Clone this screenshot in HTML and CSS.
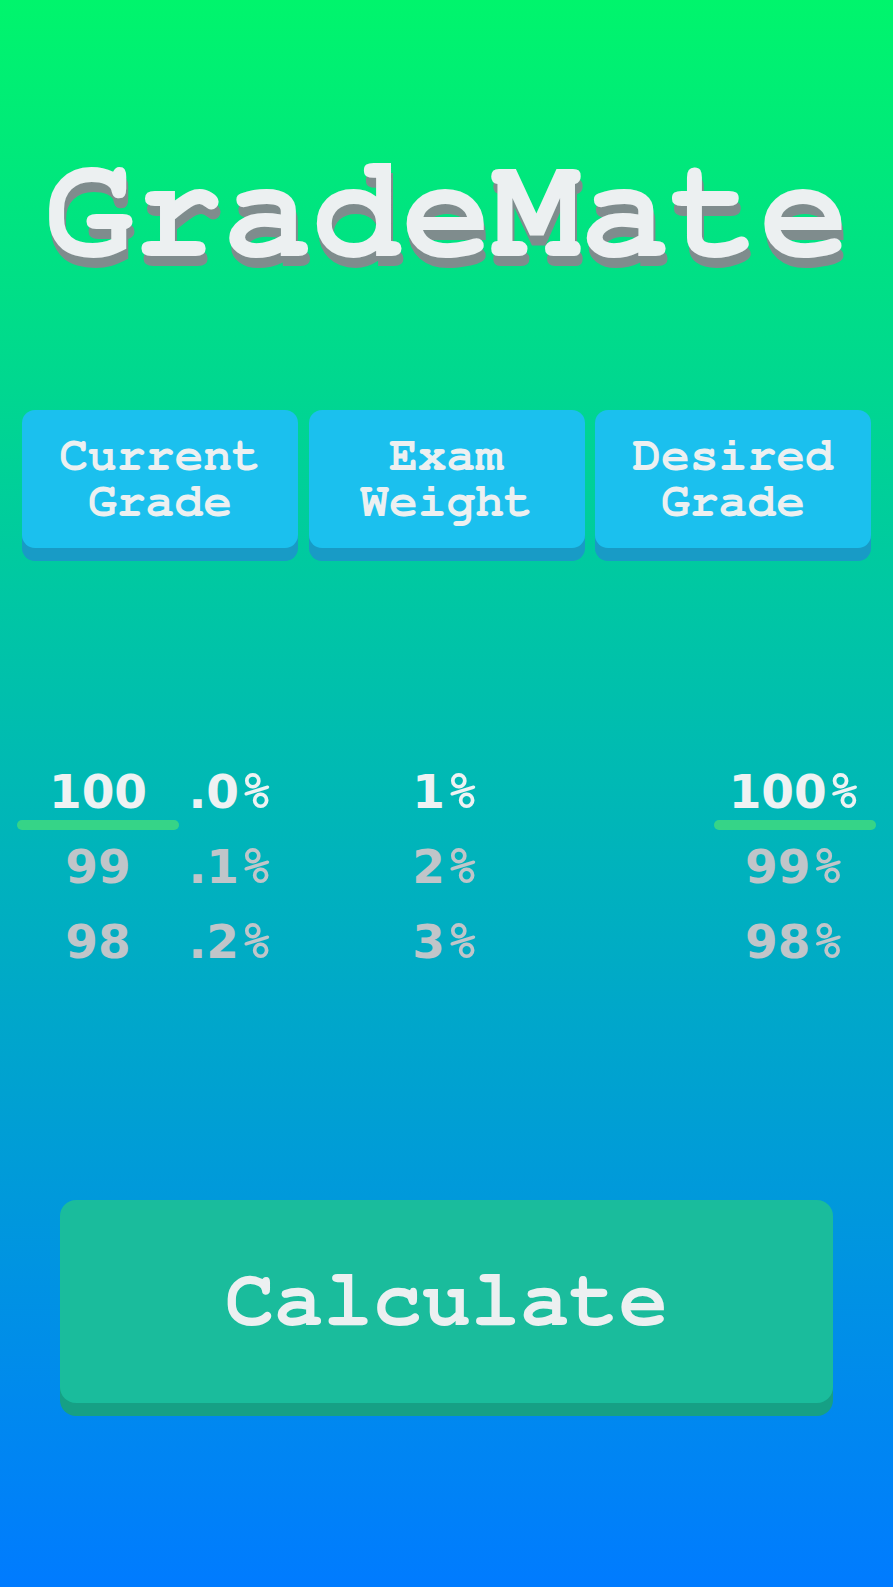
FILE: index.html
```html
<!DOCTYPE html>
<html lang="en">
<head>
<meta charset="utf-8">
<title>GradeMate</title>
<link rel="stylesheet" href="styles.css">
</head>
<body>
<main class="app">
  <h1 class="title">GradeMate</h1>

  <div class="tabs">
    <div class="tab">Current<br>Grade</div>
    <div class="tab">Exam<br>Weight</div>
    <div class="tab">Desired<br>Grade</div>
  </div>

  <div class="pickers">
    <div class="wheel">
      <div class="item selected marked"><span class="num">100</span></div>
      <div class="item"><span class="num">99</span></div>
      <div class="item"><span class="num">98</span></div>
    </div>
    <div class="wheel">
      <div class="item selected"><span class="num">.0</span><span class="pct">%</span></div>
      <div class="item"><span class="num">.1</span><span class="pct">%</span></div>
      <div class="item"><span class="num">.2</span><span class="pct">%</span></div>
    </div>
    <div class="wheel">
      <div class="item selected"><span class="num">1</span><span class="pct">%</span></div>
      <div class="item"><span class="num">2</span><span class="pct">%</span></div>
      <div class="item"><span class="num">3</span><span class="pct">%</span></div>
    </div>
    <div class="spacer"></div>
    <div class="wheel">
      <div class="item selected marked"><span class="num">100</span><span class="pct">%</span></div>
      <div class="item"><span class="num">99</span><span class="pct">%</span></div>
      <div class="item"><span class="num">98</span><span class="pct">%</span></div>
    </div>
  </div>

  <button class="calc">Calculate</button>
</main>
</body>
</html>
```

FILE: styles.css
```css
html, body {
  margin: 0;
  padding: 0;
}

body {
  width: 893px;
  height: 1587px;
  overflow: hidden;
  background: linear-gradient(to bottom, #00f56c 0%, #007bff 100%);
  font-family: "Nimbus Mono PS", "Nimbus Mono L", "FreeMono", "Liberation Mono", "Courier New", monospace;
  color: #ecf0f1;
}

.app {
  display: flex;
  flex-direction: column;
  align-items: stretch;
}

.title {
  margin: 137px 0 0;
  font-size: 149px;
  line-height: 149px;
  font-weight: 700;
  text-align: center;
  color: #ecf0f1;
  text-shadow: 2px 10px 0 #7f8c8d;
}

.tabs {
  display: grid;
  grid-template-columns: repeat(3, 1fr);
  column-gap: 10.5px;
  padding: 0 22px;
  margin-top: 124px;
}

.tab {
  height: 138px;
  border-radius: 13px;
  background: #1bc0ee;
  box-shadow: 0 13px 0 #189bc6;
  display: flex;
  align-items: center;
  justify-content: center;
  text-align: center;
  font-size: 48px;
  line-height: 46px;
  font-weight: 700;
  color: #ecf0f1;
}

.pickers {
  display: grid;
  grid-template-columns: 162px 104px 326px 1fr 162px;
  padding: 0 17px;
  margin-top: 206px;
}

.wheel {
  display: flex;
  flex-direction: column;
}

.item {
  position: relative;
  height: 75px;
  line-height: 75px;
  display: flex;
  justify-content: center;
  align-items: baseline;
  color: #c0c5c9;
}

.item.selected {
  color: #eef2f3;
}

.num {
  font-family: "DejaVu Sans", Verdana, sans-serif;
  font-weight: 700;
  font-size: 47px;
}

.pct {
  font-family: "Nimbus Mono PS", "Nimbus Mono L", "FreeMono", "Liberation Mono", "Courier New", monospace;
  font-weight: 700;
  font-size: 56px;
  margin-left: 1px;
}

.marked::after {
  content: "";
  position: absolute;
  left: 0;
  right: 0;
  top: 66px;
  height: 10px;
  border-radius: 5px;
  background: #36d487;
}

.calc {
  margin: 221px 60px 0;
  height: 203px;
  border: none;
  border-radius: 16px;
  background: #1abc9c;
  box-shadow: 0 13px 0 #16a085;
  color: #ecf0f1;
  font-family: "Nimbus Mono PS", "Nimbus Mono L", "FreeMono", "Liberation Mono", "Courier New", monospace;
  font-weight: 700;
  font-size: 82px;
  line-height: 82px;
  padding: 0 0 4px;
}
```
